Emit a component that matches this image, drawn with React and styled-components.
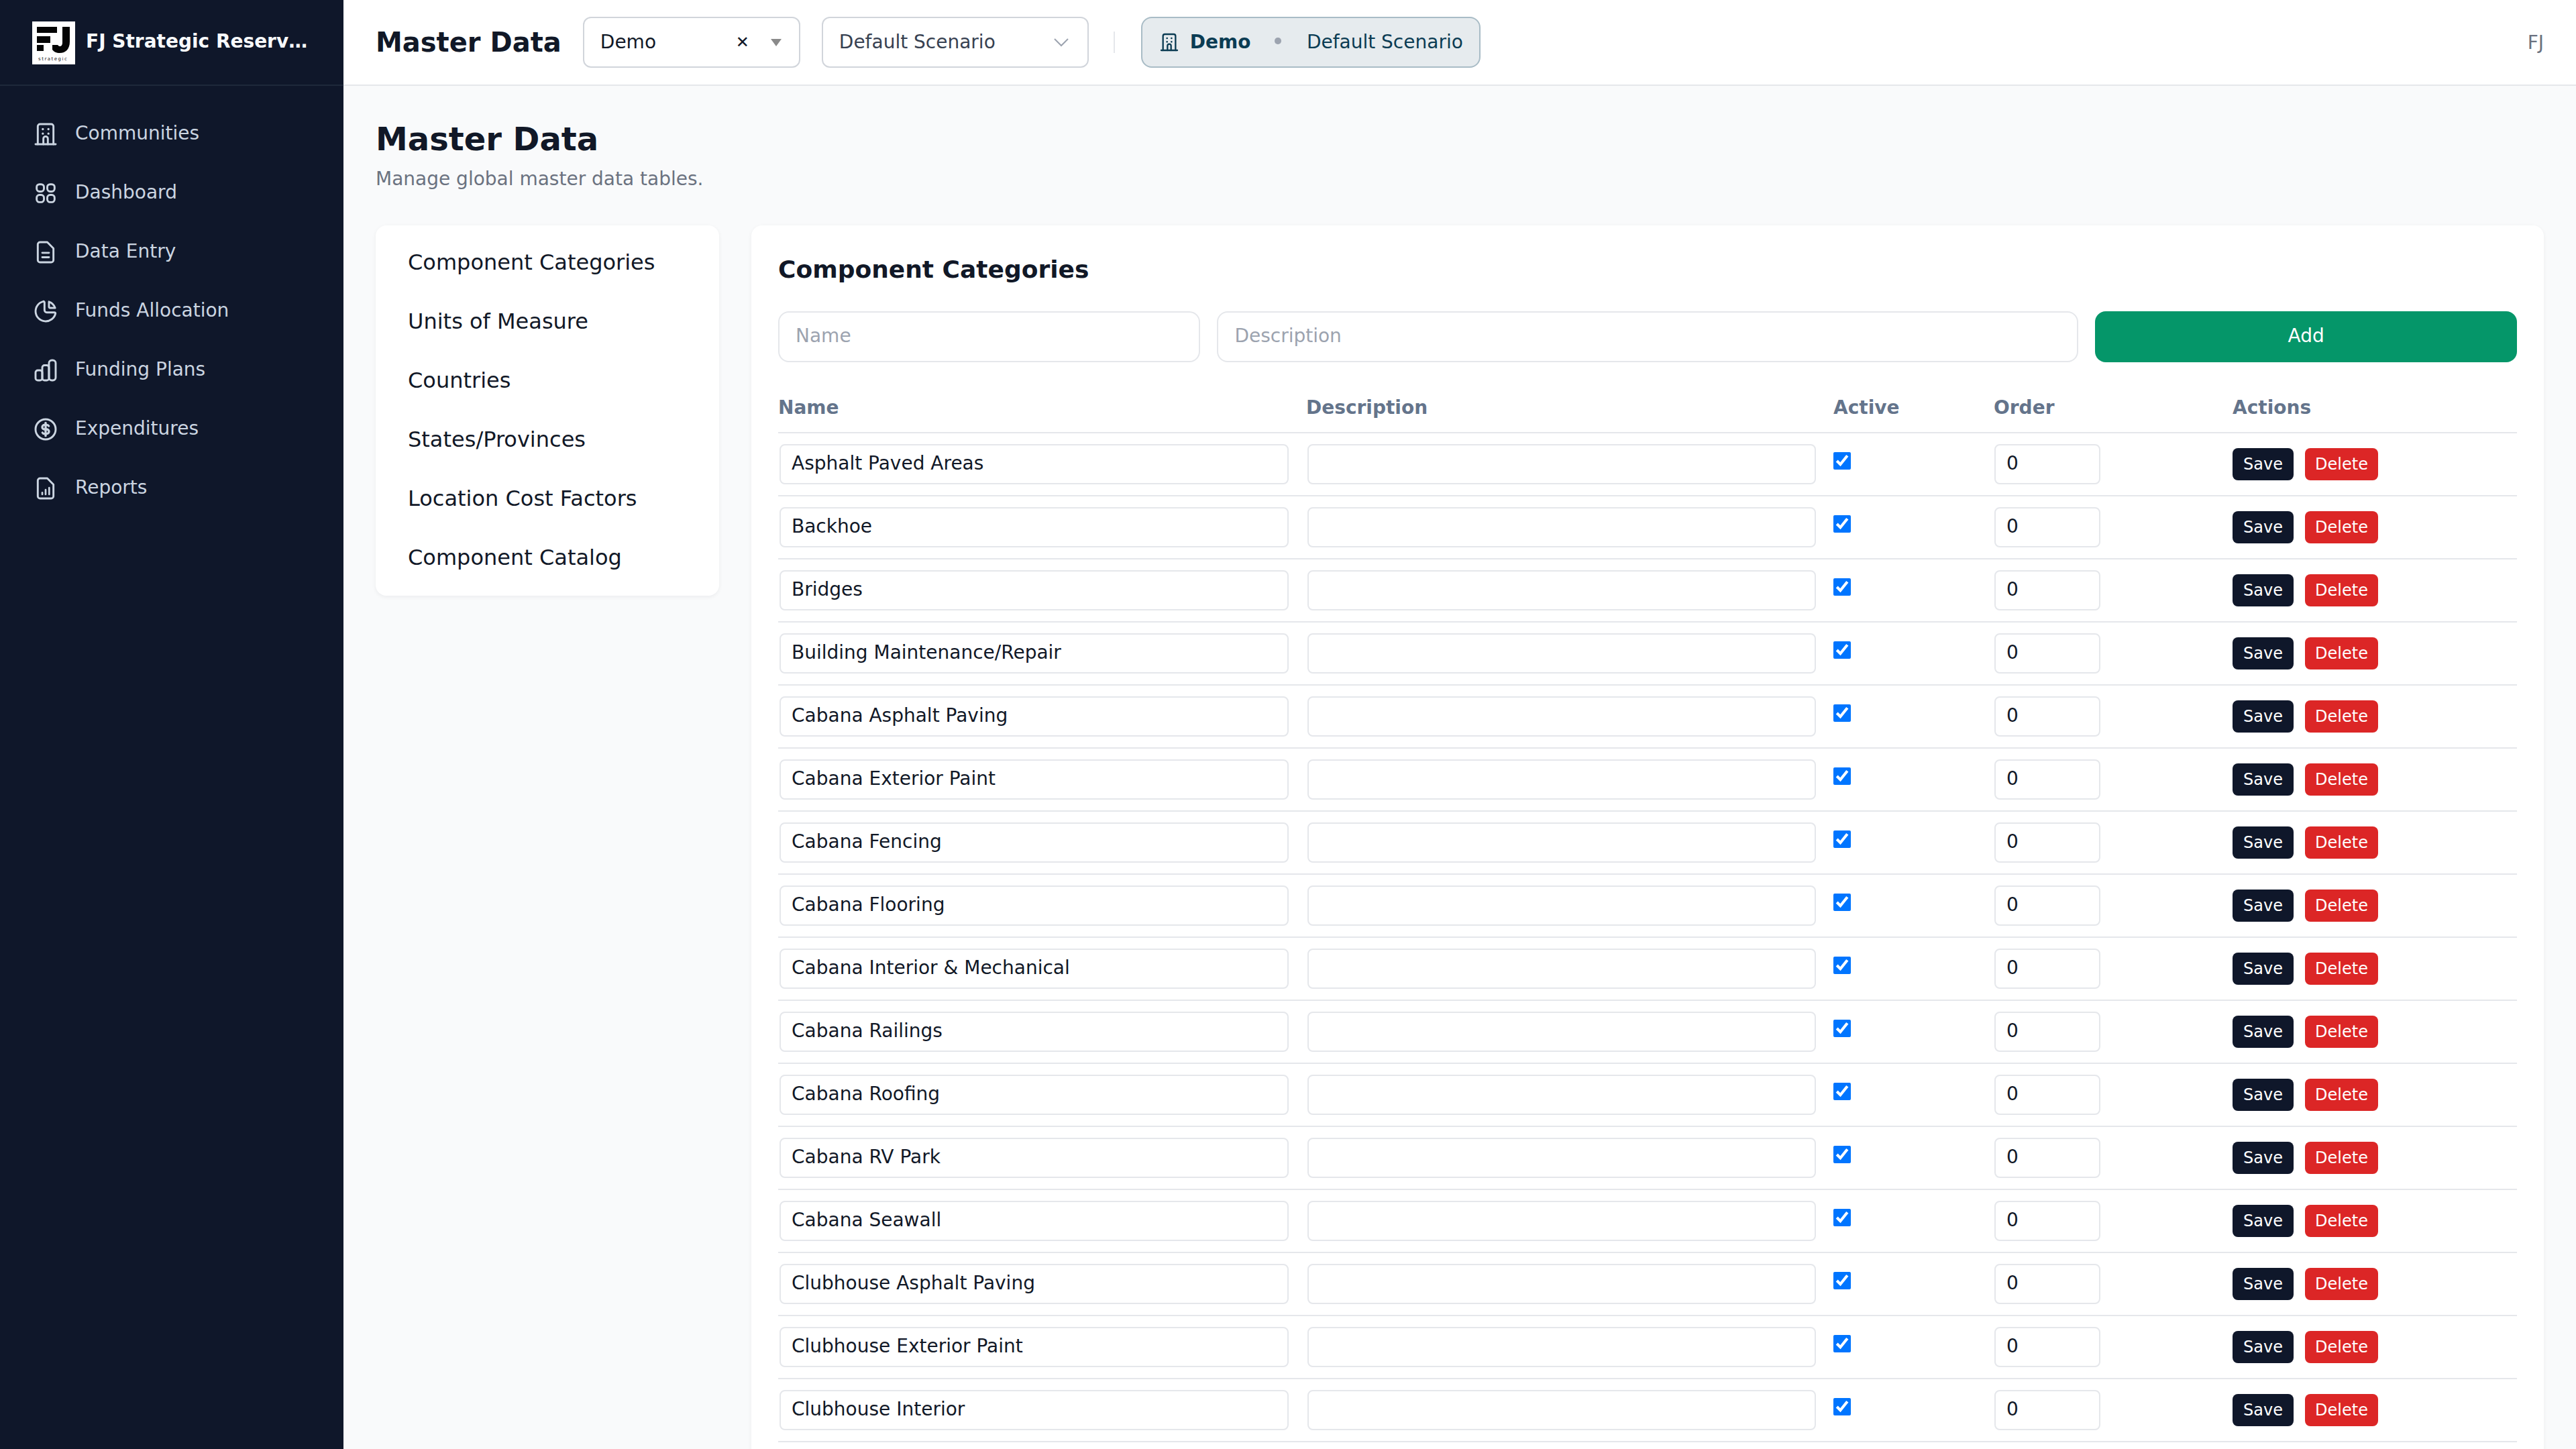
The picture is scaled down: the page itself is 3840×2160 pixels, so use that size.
import React from "react";
import styled, { createGlobalStyle } from "styled-components";

const Global = createGlobalStyle`
  html, body { margin: 0; height: 100%; overflow: hidden; background: #f9fafb; }
  body { font-family: "DejaVu Sans", sans-serif; color: #111827; }
  #root { height: 100%; }
  * { box-sizing: border-box; }
`;

const Shell = styled.div`display: flex; height: 2160px; overflow: hidden;`;
const Sidebar = styled.aside`width: 512px; flex: none; background: #0f172a; color: #cbd5e1;`;
const Brand = styled.div`
  height: 128px; display: flex; align-items: center; gap: 16px; padding: 0 48px;
  border-bottom: 2px solid #1e293b;
`;
const BrandName = styled.div`
  font-size: 28px; font-weight: 700; color: #f8fafc; white-space: nowrap; overflow: hidden;
  text-overflow: ellipsis; min-width: 0; flex: 1; letter-spacing: 0; margin-bottom: 4px;
`;
const LogoSvg = styled.svg`width: 64px; height: 64px; flex: none; display: block; margin-top: 2px;`;
const Nav = styled.nav`padding: 28px 0 0; display: flex; flex-direction: column;`;
const NavItem = styled.a`
  height: 88px; display: flex; align-items: center; gap: 24px; padding: 0 48px;
  font-size: 28px; color: #cbd5e1;
`;
const NavIconSvg = styled.svg`
  width: 40px; height: 40px; flex: none; fill: none; stroke: currentColor; stroke-width: 1.75;
  stroke-linecap: round; stroke-linejoin: round;
`;
const NavLabel = styled.span`margin-bottom: 4px;`;

const Column = styled.div`flex: 1; min-width: 0; display: flex; flex-direction: column;`;
const Header = styled.header`
  height: 128px; flex: none; background: #fff; border-bottom: 2px solid #e5e7eb;
  display: flex; align-items: center; padding: 0 48px;
`;
const HeaderTitle = styled.h1`font-size: 40px; font-weight: 700; margin: 0 32px 0 0; color: #111827; line-height: 60px;`;
const SelectBox = styled.div`
  width: ${p => p.$w}px; height: 76px; border: 2px solid #d1d5db; border-radius: 12px; background: #fff;
  display: flex; align-items: center; padding: 0 24px; font-size: 28px; margin-right: 32px;
  color: ${p => p.$muted ? "#374151" : "#111827"};
`;
const SelectText = styled.span`flex: 1; margin-bottom: 2px;`;
const ClearX = styled.span`font-size: 24px; color: #111827; margin-right: 32px;`;
const Caret = styled.span`
  width: 0; height: 0; margin-right: 2px;
  border-left: 8px solid transparent; border-right: 8px solid transparent; border-top: 11px solid #8a8a8a;
`;
const Chevron = styled.svg`width: 24px; height: 14px; fill: none; stroke: #9ca3af; stroke-width: 2; margin-right: 3px;`;
const VDivider = styled.div`width: 2px; height: 32px; background: #e5e7eb; margin: 0 39px 0 5px;`;
const ContextPill = styled.div`
  height: 76px; width: 506px; border: 2px solid #a9bcc6; border-radius: 16px; background: #e6ebee;
  display: flex; align-items: center; padding: 0 24px; color: #0b3c53; font-size: 28px; white-space: nowrap;
`;
const PillIcon = styled(NavIconSvg)`width: 32px; height: 32px; margin-right: 15px;`;
const PillStrong = styled.strong`font-weight: 700; margin-bottom: 2px;`;
const PillDot = styled.span`width: 10px; height: 10px; border-radius: 50%; background: #9ca3af; margin: 0 38px 4px 36px;`;
const PillScenario = styled.span`margin-bottom: 2px;`;
const UserTag = styled.div`margin-left: auto; font-size: 28px; color: #6b7280;`;

const Main = styled.main`flex: 1; padding: 48px; overflow: hidden; background: #f9fafb;`;
const PageTitle = styled.h2`font-size: 48px; font-weight: 700; line-height: 62px; margin: 0 0 9px; color: #111827;`;
const PageSub = styled.p`font-size: 28px; line-height: 40px; margin: 0 0 49px; color: #6b7280;`;
const Layout = styled.div`display: flex; gap: 48px; align-items: flex-start;`;
const SideCard = styled.div`
  width: 512px; flex: none; background: #fff; border-radius: 16px; padding: 12px 0;
  box-shadow: 0 2px 6px rgba(15,23,42,.06);
`;
const SideItem = styled.div`height: 88px; display: flex; align-items: center; padding: 0 48px 3px; font-size: 32px; color: #111827;`;
const Card = styled.section`
  flex: 1; min-width: 0; background: #fff; border-radius: 16px; padding: 40px;
  box-shadow: 0 2px 6px rgba(15,23,42,.06);
`;
const CardTitle = styled.h3`font-size: 36px; font-weight: 700; line-height: 52px; margin: 0 0 36px; color: #111827;`;
const AddForm = styled.div`display: grid; grid-template-columns: repeat(4, 1fr); gap: 25.6px; margin-bottom: 40px;`;
const FormInput = styled.input`
  height: 76px; border: 2px solid #e5e7eb; border-radius: 16px; background: #fff; padding: 0 24px 4px;
  font: 28px "DejaVu Sans", sans-serif; width: 100%; outline: none; grid-column: span ${p => p.$span || 1};
  &::placeholder { color: #9ca3af; opacity: 1; }
`;
const AddButton = styled.button`
  height: 76px; border: 0; border-radius: 16px; background: #059669; color: #fff; padding: 0 0 4px;
  font: 28px "DejaVu Sans", sans-serif;
`;
const columns = "787px 786px 239px 356px 424px";
const HeadRow = styled.div`
  display: grid; grid-template-columns: ${columns}; height: 66px; padding-bottom: 10px;
  border-bottom: 2px solid #e5e7eb; align-items: center;
`;
const HeadCell = styled.div`font-size: 28px; font-weight: 700; color: #64748b;`;
const Row = styled.div`
  display: grid; grid-template-columns: ${columns}; height: 94px; border-bottom: 2px solid #e5e7eb; align-items: center;
`;
const RowInput = styled.input`
  height: 60px; border: 2px solid #e5e7eb; border-radius: 8px; background: #fff; padding: 0 16px 4px;
  font: 28px "DejaVu Sans", sans-serif; color: #111827; outline: none; width: ${p => p.$w}px;
  margin-left: ${p => p.$ml || 0}px;
`;
const Check = styled.input`width: 26px; height: 26px; margin: 0 0 10px; display: block;`;
const Actions = styled.div`display: flex; gap: 17px;`;
const RowBtn = styled.button`
  height: 48px; width: ${p => p.$w}px; border: 0; border-radius: 8px; color: #fff; padding: 0;
  background: ${p => p.$bg}; font: 24px "DejaVu Sans", sans-serif;
`;

const Building = () => (
  <>
    <path d="M3 21h18" />
    <path d="M5 21V5a2 2 0 0 1 2-2h10a2 2 0 0 1 2 2v16" />
    <path d="M9.5 7.5h.01M14.5 7.5h.01M9.5 11.5h.01M14.5 11.5h.01" strokeWidth="2" />
    <path d="M10 21v-5a2 2 0 0 1 4 0v5" />
  </>
);
const navItems = [
  ["Communities", <Building />],
  ["Dashboard", <>
    <rect x="4" y="4" width="6.5" height="6.5" rx="2.5" />
    <rect x="13.5" y="4" width="6.5" height="6.5" rx="2.5" />
    <rect x="4" y="13.5" width="6.5" height="6.5" rx="2.5" />
    <rect x="13.5" y="13.5" width="6.5" height="6.5" rx="2.5" />
  </>],
  ["Data Entry", <>
    <path d="M7 3h6.5L19 8.5V19a2 2 0 0 1-2 2H7a2 2 0 0 1-2-2V5a2 2 0 0 1 2-2z" />
    <path d="M9 12.5h6M9 16.5h6" />
  </>],
  ["Funds Allocation", <>
    <path d="M10 3.2a9 9 0 1 0 10.8 10.8a1 1 0 0 0-1-1h-6.8a2 2 0 0 1-2-2v-7a.9.9 0 0 0-1-.8" />
    <path d="M15 3.5a9 9 0 0 1 5.5 5.5h-4.5a1 1 0 0 1-1-1v-4.5" />
  </>],
  ["Funding Plans", <>
    <rect x="3" y="12" width="6" height="9" rx="2" />
    <rect x="9" y="7.5" width="6" height="13.5" rx="2" />
    <rect x="15" y="3" width="6" height="18" rx="2.5" />
  </>],
  ["Expenditures", <>
    <circle cx="12" cy="12" r="9" />
    <path d="M14.8 9a2 2 0 0 0-1.8-1h-2a2 2 0 1 0 0 4h2a2 2 0 1 1 0 4h-2a2 2 0 0 1-1.8-1" strokeWidth="2" />
    <path d="M12 6.2v11.6" strokeWidth="2" />
  </>],
  ["Reports", <>
    <path d="M7 3h6.5L19 8.5V19a2 2 0 0 1-2 2H7a2 2 0 0 1-2-2V5a2 2 0 0 1 2-2z" />
    <path d="M9 17.4v-1.6M12 17.4v-4.2M15.2 17.4v-6" strokeWidth="1.6" />
  </>],
];
const sideItems = ["Component Categories", "Units of Measure", "Countries", "States/Provinces", "Location Cost Factors", "Component Catalog"];
const rows = [
  "Asphalt Paved Areas", "Backhoe", "Bridges", "Building Maintenance/Repair", "Cabana Asphalt Paving",
  "Cabana Exterior Paint", "Cabana Fencing", "Cabana Flooring", "Cabana Interior & Mechanical", "Cabana Railings",
  "Cabana Roofing", "Cabana RV Park", "Cabana Seawall", "Clubhouse Asphalt Paving", "Clubhouse Exterior Paint", "Clubhouse Interior",
];

const Logo = () => (
  <LogoSvg viewBox="0 0 64 64">
    <rect width="64" height="64" fill="#fff" />
    <path d="M7 8h30v9H7zM7 22h20v10H7zM7 35h10v9H7z" fill="#050505" />
    <path d="M45 8H56V30C56 41 50 47 41 47C36 47 32 45 30 42V35H38C39 36 40 37 41 37C43.5 37 45 35 45 32Z" fill="#050505" />
    <text x="9" y="57.5" fontFamily="DejaVu Sans" fontSize="7" letterSpacing="1.5" fill="#222">strategic</text>
  </LogoSvg>
);

export default function App() {
  return (
    <Shell>
      <Global />
      <Sidebar>
        <Brand><Logo /><BrandName>FJ Strategic Reserve Study</BrandName></Brand>
        <Nav>
          {navItems.map(([label, icon]) => (
            <NavItem key={label}>
              <NavIconSvg viewBox="0 0 24 24">{icon}</NavIconSvg>
              <NavLabel>{label}</NavLabel>
            </NavItem>
          ))}
        </Nav>
      </Sidebar>
      <Column>
        <Header>
          <HeaderTitle>Master Data</HeaderTitle>
          <SelectBox $w={324}>
            <SelectText>Demo</SelectText>
            <ClearX>✕</ClearX>
            <Caret />
          </SelectBox>
          <SelectBox $w={398} $muted>
            <SelectText>Default Scenario</SelectText>
            <Chevron viewBox="0 0 24 14"><path d="M2 2l10 10L22 2" /></Chevron>
          </SelectBox>
          <VDivider />
          <ContextPill>
            <PillIcon viewBox="0 0 24 24"><Building /></PillIcon>
            <PillStrong>Demo</PillStrong>
            <PillDot />
            <PillScenario>Default Scenario</PillScenario>
          </ContextPill>
          <UserTag>FJ</UserTag>
        </Header>
        <Main>
          <PageTitle>Master Data</PageTitle>
          <PageSub>Manage global master data tables.</PageSub>
          <Layout>
            <SideCard>
              {sideItems.map(s => <SideItem key={s}>{s}</SideItem>)}
            </SideCard>
            <Card>
              <CardTitle>Component Categories</CardTitle>
              <AddForm>
                <FormInput placeholder="Name" />
                <FormInput placeholder="Description" $span={2} />
                <AddButton>Add</AddButton>
              </AddForm>
              <HeadRow>
                <HeadCell>Name</HeadCell>
                <HeadCell>Description</HeadCell>
                <HeadCell>Active</HeadCell>
                <HeadCell>Order</HeadCell>
                <HeadCell>Actions</HeadCell>
              </HeadRow>
              {rows.map(r => (
                <Row key={r}>
                  <RowInput defaultValue={r} $w={759} $ml={2} />
                  <RowInput defaultValue="" $w={758} $ml={2} />
                  <Check type="checkbox" defaultChecked />
                  <RowInput defaultValue="0" $w={158} $ml={1} />
                  <Actions>
                    <RowBtn $w={91} $bg="#0f172a">Save</RowBtn>
                    <RowBtn $w={109} $bg="#dc2626">Delete</RowBtn>
                  </Actions>
                </Row>
              ))}
            </Card>
          </Layout>
        </Main>
      </Column>
    </Shell>
  );
}
